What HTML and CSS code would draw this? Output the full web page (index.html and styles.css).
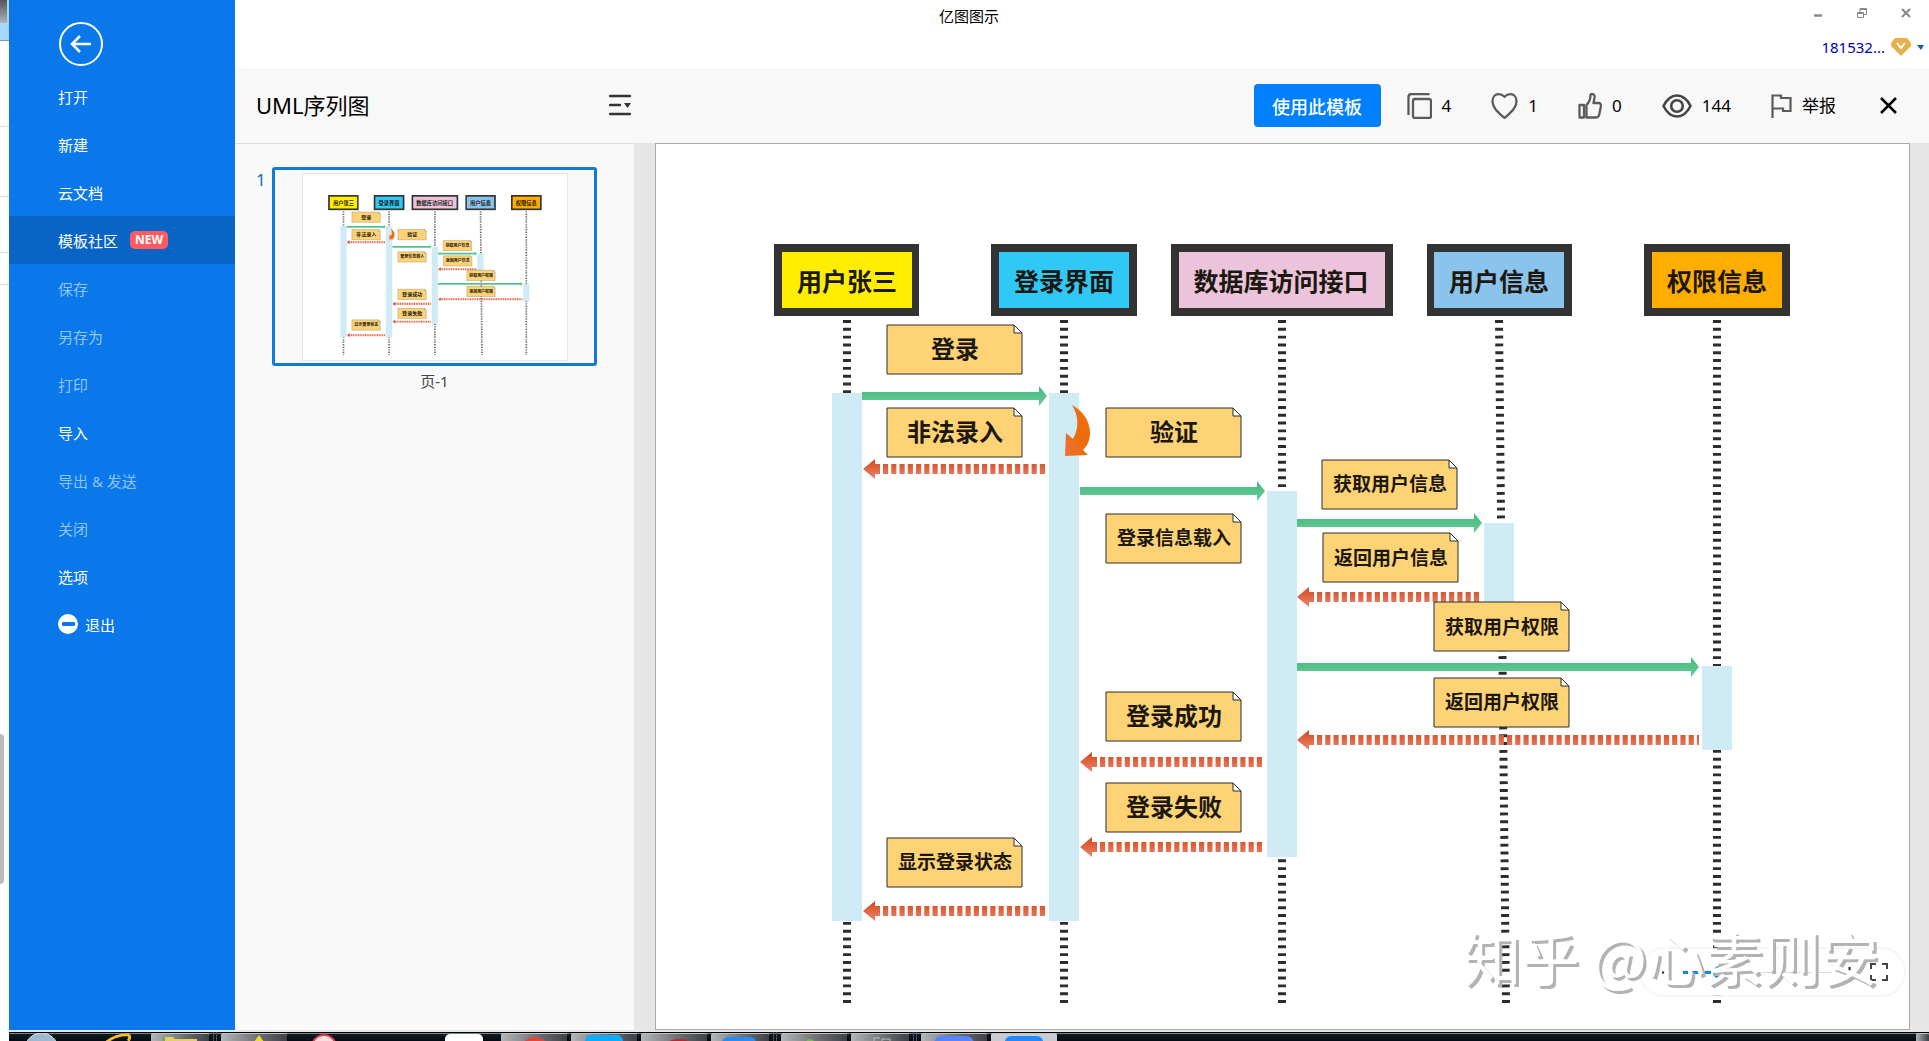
FILE: index.html
```html
<!DOCTYPE html>
<html lang="zh-CN">
<head>
<meta charset="utf-8">
<title>亿图图示</title>
<link rel="stylesheet" href="styles.css">
</head>
<body>
<div class="desktop">
  <div class="behind" aria-hidden="true">
    <div class="behind-top"></div>
    <div class="behind-tab"></div>
    <div class="behind-row"></div>
    <div class="behind-row"></div>
    <div class="behind-row short"></div>
    <div class="behind-row shorter"></div>
    <div class="behind-scroll"></div>
  </div>
  <div class="screen">
    <div class="app">
      <nav class="sidebar">
        <button class="back" aria-label="返回">
          <svg width="44" height="44" viewBox="0 0 44 44" fill="none" stroke="#fff" stroke-width="2"><circle cx="22" cy="22" r="21"/><path d="M32 22H13M21 14l-8 8 8 8" stroke-width="2.500"/></svg>
        </button>
        <ul class="menu">
          <li><a href="#open">打开</a></li>
          <li><a href="#new">新建</a></li>
          <li><a href="#cloud">云文档</a></li>
          <li><a href="#community" class="active">模板社区<span class="badge">NEW</span></a></li>
          <li><a href="#save" class="off">保存</a></li>
          <li><a href="#saveas" class="off">另存为</a></li>
          <li><a href="#print" class="off">打印</a></li>
          <li><a href="#import">导入</a></li>
          <li><a href="#export" class="off">导出 &amp; 发送</a></li>
          <li><a href="#close" class="off">关闭</a></li>
          <li><a href="#options">选项</a></li>
          <li><a href="#exit" class="exit"><svg width="20" height="20" viewBox="0 0 20 20"><circle cx="10" cy="10" r="10" fill="#fff"/><rect x="4" y="8" width="13" height="4" rx="1" fill="#0a78ea"/></svg>退出</a></li>
        </ul>
      </nav>
      <div class="main">
        <header class="titlebar">
          <h1>亿图图示</h1>
          <div class="window-buttons">
            <button aria-label="最小化"><svg width="12" height="12" viewBox="0 0 12 12"><path d="M2 8.500h8" stroke="#888" stroke-width="2.500"/></svg></button>
            <button aria-label="还原"><svg width="12" height="12" viewBox="0 0 12 12" fill="none" stroke="#888"><path d="M1.500 5.500h6v5h-6zM4 5V1.500h6.500v6H8M4 2.500h6M2 6.500h5"/></svg></button>
            <button aria-label="关闭窗口"><svg width="12" height="12" viewBox="0 0 12 12"><path d="M2 2l8 8M10 2l-8 8" stroke="#888" stroke-width="2"/></svg></button>
          </div>
          <button class="account">181532...
            <svg width="20" height="18" viewBox="0 0 20 18"><path d="M4 0h12l4 5v3L10 18 0 8V5z" fill="#e6b04c"/><path d="M6 5l4 5 4-5" fill="none" stroke="#fff" stroke-width="2"/></svg>
            <svg width="7" height="5" viewBox="0 0 7 5"><path d="M0 0h7L4 5z" fill="#1560a8"/></svg>
          </button>
        </header>
        <div class="toolbar">
          <div class="doc-head">
            <h2>UML序列图</h2>
            <button aria-label="页面列表"><svg width="22" height="22" viewBox="0 0 22 22" fill="none" stroke="#333" stroke-width="2.500" stroke-linecap="round"><path d="M1 2h20M1 11h10M1 20h20"/><path d="M15 9h7l-3.500 5z" fill="#333" stroke="none"/></svg></button>
          </div>
          <div class="actions">
            <button class="use-template">使用此模板</button>
            <button class="stat"><svg width="25" height="26" viewBox="0 0 25 26" fill="none" stroke="#5b5b5b" stroke-width="2.300"><path d="M1.500 22V4q0-3 3-3h18"/><rect x="6" y="6" width="18" height="19" rx="2"/></svg>4</button>
            <button class="stat"><svg width="27" height="26" viewBox="0 0 27 26" fill="none" stroke="#5b5b5b" stroke-width="2.300"><path d="M13.500 25C8 20 1.500 15 1.500 8.500 1.500 4 4 1.200 7.500 1.200c2.500 0 4.500 1 6 2.500 1.500-1.500 3.500-2.500 6-2.500 3.500 0 6 2.800 6 7.300C25.500 15 19 20 13.500 25z"/></svg>1</button>
            <button class="stat"><svg width="24" height="26" viewBox="0 0 24 26" fill="none" stroke="#5b5b5b" stroke-width="2.300" stroke-linejoin="round"><path d="M1.500 12H6v12.500H1.500zM8.500 24.500V12q4-4 4-10 0-1 1.500-1 3 0 2.500 4l-1 5H21q2 0 2 3l-2 9.500q-1 2-3 2z"/></svg>0</button>
            <button class="stat"><svg width="30" height="24" viewBox="0 0 30 24" fill="none" stroke="#444" stroke-width="2.600"><path d="M1.500 12C5 5 10 1.500 15 1.500S25 5 28.500 12C25 19 20 22.500 15 22.500S5 19 1.500 12z"/><circle cx="15" cy="12" r="5.800"/></svg>144</button>
            <button class="stat"><svg width="21" height="24" viewBox="0 0 21 24" fill="none" stroke="#5b5b5b" stroke-width="2.200"><path d="M1.500 24V1.500H10V4h9.500v13H12v-2.500H1.500"/></svg>举报</button>
            <button class="dismiss" aria-label="关闭"><svg width="17" height="17" viewBox="0 0 17 17"><path d="M1 1l15 15M16 1L1 16" stroke="#000" stroke-width="2.500"/></svg></button>
          </div>
        </div>
        <div class="workspace">
          <aside class="pages">
            <span class="page-number">1</span>
            <figure>
              <a href="#page-1" class="thumb" aria-label="页-1"><svg viewBox="656 144 1253 885"><use href="#sequence"/></svg></a>
              <figcaption>页-1</figcaption>
            </figure>
          </aside>
          <section class="canvas">
            <svg class="diagram" viewBox="656 144 1253 885">
              <defs>
                <linearGradient id="red" gradientUnits="userSpaceOnUse" x1="0" y1="-8" x2="0" y2="8"><stop offset="0" stop-color="#d84c20"/><stop offset="1" stop-color="#e6806a"/></linearGradient>
                <linearGradient id="green" gradientUnits="userSpaceOnUse" x1="0" y1="-6" x2="0" y2="6"><stop offset="0" stop-color="#48bd83"/><stop offset="1" stop-color="#62c894"/></linearGradient>
                <linearGradient id="turn" x1="0" y1="1" x2="1" y2="0"><stop offset="0" stop-color="#e9743a"/><stop offset=".5" stop-color="#ee6a0c"/><stop offset="1" stop-color="#f0700a"/></linearGradient>
                <g id="note"><path d="M0 0h127l8 8v41H0z" fill="#fdd375" stroke="#2c2c2c"/><path d="M127 0v8h8z" fill="#fff" stroke="#2c2c2c"/></g>
                <path id="head" d="M0 0L12 -10V-5H17V5H12V10z" fill="url(#red)"/>
                <g id="call"><path d="M0 -4H177V-10L185 0 177 10V4H0z" fill="url(#green)"/></g>
                <g id="reply"><use href="#head"/><path class="reply-line" d="M20 0H182" pathLength="157"/></g>
              </defs>
              <g id="sequence">
                <g class="lifelines">
                  <path d="M847 320V1003" pathLength="699"/>
                  <path d="M1064 320V1003" pathLength="699"/>
                  <path d="M1282 320V1003" pathLength="699"/>
                  <path d="M1499 320L1506 1003" pathLength="699"/>
                  <path d="M1717 320V1003" pathLength="699"/>
                </g>
                <g fill="#cfebf5">
                  <rect x="832" y="393" width="30" height="528"/>
                  <rect x="1049" y="393" width="30" height="528"/>
                  <rect x="1267" y="491" width="30" height="366"/>
                  <rect x="1484" y="523" width="30" height="82"/>
                  <rect x="1702" y="666" width="30" height="84"/>
                </g>
                <g fill="#333">
                  <rect x="774" y="244" width="145" height="72"/>
                  <rect x="991" y="244" width="146" height="72"/>
                  <rect x="1171" y="244" width="222" height="72"/>
                  <rect x="1427" y="244" width="145" height="72"/>
                  <rect x="1644" y="244" width="146" height="72"/>
                </g>
                <rect x="782" y="252" width="130" height="56" fill="#ffee00"/>
                <rect x="999" y="252" width="130" height="56" fill="#2fc8f7"/>
                <rect x="1179" y="252" width="206" height="56" fill="#ebc4dc"/>
                <rect x="1434" y="252" width="130" height="56" fill="#8ac3eb"/>
                <rect x="1652" y="252" width="130" height="56" fill="#ffae00"/>
                <g class="actor">
                  <text x="847" y="291">用户张三</text>
                  <text x="1064" y="291">登录界面</text>
                  <text x="1281" y="291">数据库访问接口</text>
                  <text x="1499" y="291">用户信息</text>
                  <text x="1717" y="291">权限信息</text>
                </g>
                <use href="#call" x="862" y="396"/>
                <use href="#call" x="1080" y="491"/>
                <use href="#call" x="1297" y="523"/>
                <g transform="translate(1297 667)"><path d="M0 -4H394V-10L402 0 394 10V4H0z" fill="url(#green)"/></g>
                <use href="#reply" x="863" y="469"/>
                <use href="#reply" x="1297" y="597"/>
                <g transform="translate(1297 740)"><use href="#head"/><path class="reply-line" d="M20 0H402" pathLength="370"/></g>
                <use href="#reply" x="1080" y="762"/>
                <use href="#reply" x="1080" y="847"/>
                <use href="#reply" x="863" y="911"/>
                <path d="M1072 405C1083 411 1090 421 1090 433 1090 441 1087 446 1083 450L1088 455 1065 456 1066 433 1073 439C1080 427 1078 415 1072 405z" fill="url(#turn)"/>
                <use href="#note" x="887" y="325"/>
                <use href="#note" x="887" y="408"/>
                <use href="#note" x="1106" y="408"/>
                <use href="#note" x="1106" y="514"/>
                <use href="#note" x="1322" y="460"/>
                <use href="#note" x="1323" y="533"/>
                <use href="#note" x="1434" y="602"/>
                <use href="#note" x="1434" y="678"/>
                <use href="#note" x="1106" y="692"/>
                <use href="#note" x="1106" y="783"/>
                <use href="#note" x="887" y="838"/>
                <g class="label-large">
                  <text x="955" y="358">登录</text>
                  <text x="955" y="441">非法录入</text>
                  <text x="1174" y="441">验证</text>
                  <text x="1174" y="725">登录成功</text>
                  <text x="1174" y="816">登录失败</text>
                </g>
                <g class="label-small">
                  <text x="1174" y="545">登录信息载入</text>
                  <text x="1390" y="491">获取用户信息</text>
                  <text x="1391" y="565">返回用户信息</text>
                  <text x="1502" y="634">获取用户权限</text>
                  <text x="1502" y="709">返回用户权限</text>
                  <text x="955" y="869">显示登录状态</text>
                </g>
              </g>
            </svg>
            <div class="zoom-bar">
              <button aria-label="缩小"><svg width="9" height="9" viewBox="0 0 9 9"><path d="M0 4.500h9" stroke="#222" stroke-width="2"/></svg></button>
              <input type="range" min="0" max="100" value="22" aria-label="缩放">
              <button aria-label="放大"><svg width="11" height="11" viewBox="0 0 11 11"><path d="M0 5.500h11M5.500 0v11" stroke="#222" stroke-width="2"/></svg></button>
              <button class="full" aria-label="全屏"><svg width="18" height="18" viewBox="0 0 18 18" fill="none" stroke="#444" stroke-width="2"><path d="M1 6V1h5M12 1h5v5M17 12v5h-5M6 17H1v-5"/></svg></button>
            </div>
            <div class="watermark">知乎 @心素则安</div>
          </section>
        </div>
      </div>
    </div>
    <footer class="taskbar">
      <button class="plain wide" aria-label="开始"><svg viewBox="0 0 68 8"><circle cx="33" cy="17" r="17" fill="#9db8d0" stroke="#dce8f2"/></svg></button>
      <button class="plain wide" aria-label="浏览器"><svg viewBox="0 0 68 8"><path d="M27 9Q38 1 49 2q3 1 0 6" fill="none" stroke="#f0c028" stroke-width="3"/></svg></button>
      <button class="narrow" aria-label="文件夹"><svg viewBox="0 0 58 8"><path d="M12 8V3h10l2 2h22v3z" fill="#e8ce68"/><path d="M13 3v5" stroke="#63b34a" stroke-width="2"/></svg></button>
      <span class="sep"></span>
      <button aria-label="应用 1"><svg viewBox="0 0 66 8"><path d="M38 1l5 7H33z" fill="#f6d92e"/></svg></button>
      <button class="plain" aria-label="应用 2"><svg viewBox="0 0 66 8"><circle cx="33" cy="14" r="12" fill="#f6dde0" stroke="#d63c4c" stroke-width="2"/></svg></button>
      <span class="slot"></span>
      <button class="plain" aria-label="应用 3"><svg viewBox="0 0 66 8"><rect x="14" y="1" width="38" height="20" rx="5" fill="#fff"/></svg></button>
      <button aria-label="应用 4"><svg viewBox="0 0 66 8"><circle cx="34" cy="18" r="15" fill="#e2453a"/></svg></button>
      <button aria-label="应用 5"><svg viewBox="0 0 66 8"><rect x="14" y="1" width="38" height="20" rx="6" fill="#10aaff"/></svg></button>
      <button aria-label="应用 6"><svg viewBox="0 0 66 8"><ellipse cx="38" cy="9" rx="11" ry="4" fill="#b52a30"/></svg></button>
      <button class="narrow" aria-label="应用 7"><svg viewBox="0 0 58 8"><rect x="11" y="3" width="34" height="20" rx="6" fill="#2b8cf0"/></svg></button>
      <span class="sep"></span>
      <button aria-label="应用 8"><svg viewBox="0 0 66 8"><circle cx="29" cy="9" r="4" fill="#72c04a"/></svg></button>
      <button class="narrow" aria-label="应用 9"><svg viewBox="0 0 58 8"><path d="M23 8V4h6M31 8V5h8v3" fill="none" stroke="#bbb"/></svg></button>
      <span class="sep"></span>
      <button aria-label="应用 10"><svg viewBox="0 0 66 8"><rect x="13" y="2" width="40" height="20" rx="8" fill="#5a84ff"/></svg></button>
      <button class="current" aria-label="亿图图示"><svg viewBox="0 0 66 8"><rect x="14" y="2" width="38" height="20" rx="6" fill="#2189fb"/></svg></button>
      <button class="show-desktop" aria-label="显示桌面"></button>
    </footer>
  </div>
</div>
</body>
</html>
```
FILE: styles.css
```css
* { box-sizing: border-box; }
body {
  margin: 0;
  font-family: "Noto Sans", "Noto Sans CJK SC", sans-serif;
  font-size: 15px;
  color: #000;
}
button {
  border: 0;
  padding: 0;
  background: none;
  font: inherit;
  color: inherit;
}
button svg, a svg { display: block; flex: none; }
h1, h2, ul, figure { margin: 0; padding: 0; font-weight: 400; }

.desktop { display: flex; height: 100vh; overflow: hidden; background: #fff; }
.behind { width: 9px; flex: none; display: flex; flex-direction: column; background: #fcfdfd; position: relative; }
.behind-top { height: 23px; background: linear-gradient(#555, #aab4bc); border-right: 2px solid #a6d4f8; }
.behind-tab { height: 18px; background: #a6d8ff; border-bottom: 1px solid #7f96a8; }
.behind-row { height: 86px; border-bottom: 1px solid #dcdcdc; }
.behind-row + .behind-row { height: 70px; }
.behind-row.short { height: 56px; }
.behind-row.shorter { height: 32px; }
.behind-scroll { position: absolute; left: 0; bottom: 157px; width: 4px; height: 150px; background: #bbb; border-radius: 0 4px 4px 0; }

.screen { flex: 1; min-width: 0; display: flex; flex-direction: column; }
.app { flex: 1; min-height: 0; display: flex; }

.sidebar { width: 226px; flex: none; background: #0a78ea; color: #fff; padding-top: 22px; }
.back { display: block; margin-left: 50px; }
.menu { list-style: none; padding-top: 6px; }
.menu a {
  display: flex;
  align-items: center;
  height: 48px;
  padding-left: 49px;
  color: #fff;
  text-decoration: none;
}
.menu .active { background: #0865c6; gap: 12px; }
.menu .off { color: #91c4f8; }
.menu .exit { gap: 7px; }
.badge {
  height: 18px;
  width: 38px;
  border-radius: 5px;
  background: #ff5b60;
  font-size: 12px;
  font-weight: 700;
  line-height: 18px;
  text-align: center;
}

.main { flex: 1; min-width: 0; display: flex; flex-direction: column; }
.titlebar { height: 68px; flex: none; position: relative; display: flex; flex-direction: column; align-items: flex-end; }
.titlebar h1 { position: absolute; left: -226px; right: 0; top: 4px; text-align: center; font-size: 15px; line-height: 24px; }
.window-buttons { display: flex; gap: 32px; padding: 7px 17px 0 0; }
.account { display: flex; align-items: center; gap: 6px; margin: 17px 5px 0 0; line-height: 22px; color: #0000a8; }

.toolbar { height: 75px; flex: none; display: flex; align-items: center; background: #f8f8f8; }
.doc-head { width: 421px; flex: none; display: flex; align-items: center; justify-content: space-between; padding: 0 25px 2px 21px; }
.doc-head h2 { font-size: 22px; line-height: 30px; }
.actions { flex: 1; display: flex; align-items: center; justify-content: flex-end; gap: 40px; padding-right: 32px; }
.use-template {
  width: 127px;
  height: 43px;
  margin-right: -14px;
  border-radius: 4px;
  background: #0080ff;
  color: #fff;
  font-size: 18px;
  font-weight: 500;
}
.stat { display: flex; align-items: center; gap: 10px; font-size: 17px; line-height: 26px; }
.dismiss { margin-left: 4px; }

.workspace { flex: 1; min-height: 0; display: flex; }
.pages { width: 399px; flex: none; display: flex; gap: 6px; padding: 23px 0 0 21px; background: #f9f9f9; border-top: 1px solid #dedede; }
.page-number { width: 10px; font-size: 17px; line-height: 26px; color: #1569c4; }
figure { text-align: center; }
figcaption { margin-top: 3px; line-height: 24px; color: #444; }
.thumb { display: flex; justify-content: center; align-items: center; width: 325px; height: 199px; border: 3px solid #117bdc; border-radius: 3px; }
.thumb svg { width: 266px; height: 188px; background: #fff; border: 1px solid #e4e8ea; }
.canvas { flex: 1; min-width: 0; position: relative; margin-left: 21px; background: #fff; border: 1px solid #aaa; box-shadow: -21px 0 #e6e6e6, 20px 0 #e6e6e6; margin-right: 19px; clip-path: inset(0 -19px 0 -21px); }
.diagram { position: absolute; width: 100%; height: 100%; }
.lifelines path { fill: none; stroke: #2c2c2c; stroke-width: 8; stroke-dasharray: 3 5; }
.reply-line { fill: none; stroke: url(#red); stroke-width: 10; stroke-dasharray: 5 3; }
#sequence text { text-anchor: middle; font-family: "Noto Sans CJK SC", sans-serif; font-weight: 700; fill: #1c1810; }
.actor { font-size: 25px; }
.label-large { font-size: 24px; }
.label-small { font-size: 19px; }

.zoom-bar {
  position: absolute;
  right: 5px;
  bottom: 34px;
  display: flex;
  align-items: center;
  gap: 12px;
  height: 46px;
  padding: 0 16px 0 21px;
  border-radius: 23px;
  background: #fff;
  box-shadow: 0 0 4px #e4e4e4;
}
.full { margin-left: 3px; }
.zoom-bar input {
  appearance: none;
  width: 149px;
  height: 14px;
  margin: 0;
  background: linear-gradient(#1288e0, #1288e0) 0 6px / 28px 3px no-repeat, linear-gradient(#ddd, #ddd) 0 7px / 100% 1px no-repeat;
}
.zoom-bar input::-webkit-slider-thumb { appearance: none; width: 13px; height: 13px; border: 3px solid #1288e0; border-radius: 50%; background: #fff; }
.watermark {
  position: absolute;
  right: 30px;
  bottom: 44px;
  font-family: "Noto Sans CJK SC", sans-serif;
  font-size: 58px;
  line-height: 58px;
  color: #fff;
  text-shadow: 3px 3px 0 #b3b3b3;
  white-space: nowrap;
  pointer-events: none;
}

.taskbar {
  height: 11px;
  flex: none;
  display: flex;
  gap: 4px;
  border-top: 2px solid #e4e8ea;
  background: linear-gradient(#000 1px, #76858c 1px, #76858c 2px, #111a22 2px, #060b12);
}
.taskbar button {
  width: 66px;
  height: 8px;
  margin-top: 1px;
  flex: none;
  overflow: hidden;
  border-radius: 2px 2px 0 0;
  background: linear-gradient(90deg, #b4b6b8, #686b6f 60%, #3d4145);
  border-top: 1px solid #bfc3c6;
}
.taskbar .plain { background: none; border: 0; }
.taskbar .wide { width: 67px; }
.taskbar .narrow { width: 58px; }
.taskbar .current { background: #c8cbd0; }
.slot { width: 66px; }
.sep { width: 4px; border: solid #4c5256; border-width: 0 1px; }
.taskbar .show-desktop { width: 13px; margin-left: auto; }
```
